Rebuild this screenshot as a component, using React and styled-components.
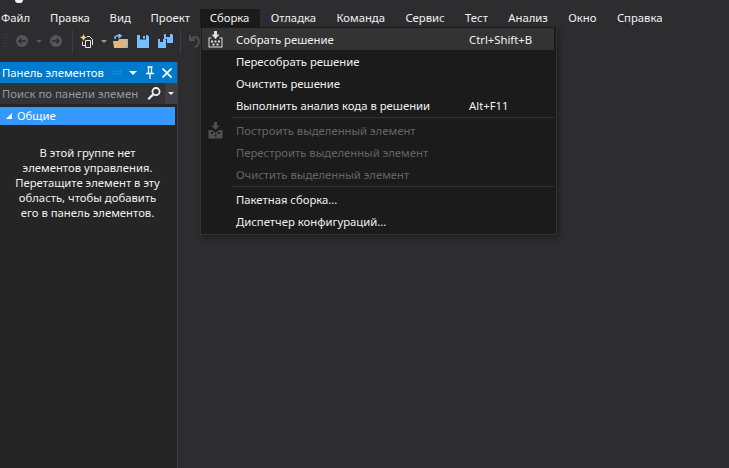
import React from 'react';
import styled, { createGlobalStyle } from 'styled-components';

const MENU = ['Файл', 'Правка', 'Вид', 'Проект', 'Сборка', 'Отладка', 'Команда', 'Сервис', 'Тест', 'Анализ', 'Окно', 'Справка'];

const GlobalStyle = createGlobalStyle`
  html, body { margin: 0; padding: 0; background: #2d2d30; }
  body { font-family: "Noto Sans", "Open Sans", sans-serif; font-size: 11.3px; overflow: hidden; }
  * { box-sizing: border-box; }
`;

const Page = styled.div`
  position: relative;
  width: 729px;
  height: 468px;
  display: flex;
  flex-direction: column;
  background: #2d2d30;
  color: #f1f1f1;
  overflow: hidden;
`;

const TitleStrip = styled.div`
  height: 9px;
  padding-left: 15px;
  flex: none;
`;

const LogoTip = styled.div`
  width: 8px;
  height: 3px;
  background: #f1f1f1;
  border-radius: 0 0 4px 4px;
`;

const MenuBar = styled.nav`
  display: flex;
  height: 18px;
  flex: none;
`;

const MenuItem = styled.div`
  height: 18px;
  line-height: 17px;
  padding: 0 10.2px;
  color: #f1f1f1;
  background: ${p => (p.$open ? '#1b1b1c' : 'transparent')};
  &:first-child { padding: 0 9px 0 1px; }
  &:nth-child(-n + 4) { padding-right: 9.6px; }
  ${p => p.$open && 'margin-right: 1px;'}
`;

const Toolbar = styled.div`
  display: flex;
  align-items: center;
  height: 35px;
  flex: none;
  padding: 0 0 7px 3px;
`;

const Grip = styled.div`
  width: 5px;
  height: 16px;
  margin-right: 8px;
  background-image: radial-gradient(#4a4a4e 0.7px, transparent 0.8px);
  background-size: 2.5px 3px;
`;

const ToolIcon = styled.svg`
  display: block;
  flex: none;
  margin-right: ${p => p.$gap || 0}px;
`;

const Caret = styled.div`
  flex: none;
  width: 0;
  height: 0;
  border-left: 3px solid transparent;
  border-right: 3px solid transparent;
  border-top: 3px solid ${p => p.$color};
  margin-right: ${p => p.$gap || 0}px;
`;

const ToolSep = styled.div`
  width: 1px;
  height: 23px;
  background: #3f3f42;
  flex: none;
  margin-right: ${p => p.$gap || 0}px;
`;

const Body = styled.div`
  flex: 1;
  display: flex;
  min-height: 0;
`;

const Panel = styled.aside`
  width: 178px;
  flex: none;
  display: flex;
  flex-direction: column;
  background: #252526;
  border-right: 1px solid #3f3f46;
`;

const PanelHeader = styled.header`
  height: 21px;
  flex: none;
  display: flex;
  align-items: center;
  padding-left: 2px;
  background: #007acc;
  color: #fff;
`;

const PanelTitle = styled.span`
  width: 110px;
  white-space: nowrap;
`;

const HeaderGrip = styled.div`
  width: 9px;
  height: 6px;
  margin-right: 8px;
  background-image: radial-gradient(#5fb2e6 0.6px, transparent 0.7px);
  background-size: 2.5px 2.5px;
`;

const HeaderCaret = styled(Caret)`
  border-left-width: 4px;
  border-right-width: 4px;
  border-top-width: 4px;
  margin-right: 9px;
`;

const SearchRow = styled.div`
  height: 21px;
  flex: none;
  display: flex;
  align-items: stretch;
  background: #333337;
`;

const SearchText = styled.div`
  width: 143px;
  padding-left: 2px;
  line-height: 21px;
  color: #999;
  white-space: nowrap;
  overflow: hidden;
`;

const SearchButton = styled.div`
  width: 22px;
  display: flex;
  align-items: center;
  justify-content: center;
`;

const SearchDrop = styled.div`
  width: 12px;
  display: flex;
  align-items: center;
  justify-content: center;
  background: #3f3f46;
`;

const GroupRow = styled.div`
  height: 18px;
  width: 175px;
  margin-top: 3px;
  flex: none;
  display: flex;
  align-items: center;
  gap: 5px;
  padding-left: 6px;
  line-height: 18px;
  background: #3399ff;
  color: #fff;
`;

const EmptyMessage = styled.p`
  margin: 20px 0 0;
  padding: 0 6px 0 4px;
  text-align: center;
  line-height: 15px;
  color: #f1f1f1;
  white-space: nowrap;
`;

const Dropdown = styled.div`
  position: absolute;
  left: 200px;
  top: 27px;
  width: 357px;
  height: 208px;
  padding: 1px 2px 1px 1px;
  background: #1b1b1c;
  border: 1px solid #333337;
  border-top: none;
  box-shadow: 2px 3px 5px rgba(0, 0, 0, 0.35);
`;

const Row = styled.div`
  display: flex;
  align-items: center;
  height: 22px;
  background: ${p => (p.$active ? '#333334' : 'transparent')};
  color: ${p => (p.$disabled ? '#656565' : '#f1f1f1')};
`;

const RowIcon = styled.div`
  width: 34px;
  flex: none;
  display: flex;
  justify-content: center;
  padding-right: 7px;
`;

const RowLabel = styled.span`
  width: 233px;
  flex: none;
  white-space: nowrap;
`;

const RowDivider = styled.div`
  height: 1px;
  margin: 1px 0 1px 30px;
  background: #333337;
`;

const NavIcon = ({ dir, gap }) => (
  <ToolIcon $gap={gap} width="12" height="12" viewBox="0 0 12 12">
    <circle cx="6" cy="6" r="6" fill="#555558" />
    <path d={dir === 'left' ? 'M10 6H3M5.5 3.5 3 6l2.5 2.5' : 'M2 6h7M6.5 3.5 9 6 6.5 8.5'} stroke="#2d2d30" strokeWidth="1.5" fill="none" />
  </ToolIcon>
);

const NewProjectIcon = ({ gap }) => (
  <ToolIcon $gap={gap} width="13" height="14" viewBox="0 0 13 14">
    <path d="M2.5 7.5V11.5H5M7 2.5H9.5L12.5 5.5V11" stroke="#e6e6e6" fill="none" />
    <path d="M5.5 6.5H10.5V13.5H5.5Z" stroke="#e6e6e6" fill="#2d2d30" />
    <path d="M3.5 0 4.6 2.4 7 3.5 4.6 4.6 3.5 7 2.4 4.6 0 3.5 2.4 2.4Z" fill="#f2cf7e" />
  </ToolIcon>
);

const OpenIcon = ({ gap }) => (
  <ToolIcon $gap={gap} width="15" height="14" viewBox="0 0 15 14">
    <path d="M0 7H5L6 5H14.5V14H1Z" fill="#dcb67a" />
    <path d="M14.5 5V13.5H12" stroke="#75beff" fill="none" />
    <path d="M2 5V3.5C2 2 4 1.5 7 1.5M5.5 0 8 1.8 5.5 4" stroke="#75beff" strokeWidth="1.6" fill="none" />
  </ToolIcon>
);

const SaveIcon = ({ gap }) => (
  <ToolIcon $gap={gap} width="12" height="13" viewBox="0 0 12 13">
    <path fillRule="evenodd" d="M0 0H10.5L12 1.5V13H0ZM3 0V4.5H9V0Z" fill="#75beff" />
    <rect x="6" y="1" width="2" height="2.5" fill="#75beff" />
  </ToolIcon>
);

const SaveAllIcon = ({ gap }) => (
  <ToolIcon $gap={gap} width="15" height="14" viewBox="0 0 15 14">
    <path fillRule="evenodd" d="M6 0H14L15 1V9H9V5H6ZM8 0V3H12V0Z" fill="#75beff" />
    <path fillRule="evenodd" d="M0 5H7L8 6V14H0ZM2 5V8H5V5Z" fill="#75beff" />
  </ToolIcon>
);

const UndoIcon = () => (
  <ToolIcon width="11" height="14" viewBox="0 0 11 14">
    <path d="M1 1V6H6M1.5 5.5 4 3.5C7.5 2 10 4 10 7.5 10 10 8.5 12 6 13" stroke="#505053" strokeWidth="2" fill="none" />
  </ToolIcon>
);

const BuildIcon = ({ color, solid }) => (
  <svg width="15" height="17" viewBox="0 0 15 17">
    <path d="M6 0H9V3.5H11.5L7.5 8 3.5 3.5H6Z" fill={color} />
    {solid ? (
      <path fillRule="evenodd" d="M0.5 8H4L7.5 11 11 8H14.5V16.5H0.5ZM3 10V12H5V10ZM10 10V12H12V10ZM6.5 12.5V14.5H8.5V12.5Z" fill={color} />
    ) : (
      <g fill={color}>
        <path d="M3.5 6.5H0.5V16.5H14.5V6.5H11.5V7.5H13.5V15.5H1.5V7.5H3.5Z" />
        <rect x="3" y="9.5" width="2" height="2" />
        <rect x="6.5" y="9.5" width="2" height="2" />
        <rect x="10" y="9.5" width="2" height="2" />
        <rect x="4.5" y="12.5" width="2" height="2" />
        <rect x="8.5" y="12.5" width="2" height="2" />
      </g>
    )}
  </svg>
);

const PinGlyph = styled.svg`
  margin-right: 8px;
`;

const PinIcon = () => (
  <PinGlyph width="8" height="13" viewBox="0 0 8 13">
    <path d="M1.5 1H6.5M2.5 1V7M5.5 1V7M0 7.5H8M4 8V13" stroke="#fff" strokeWidth="1.3" fill="none" />
  </PinGlyph>
);

const CloseIcon = () => (
  <svg width="10" height="10" viewBox="0 0 10 10">
    <path d="M0.5 0.5 9.5 9.5M9.5 0.5 0.5 9.5" stroke="#fff" strokeWidth="1.7" />
  </svg>
);

const SearchIcon = () => (
  <svg width="14" height="13" viewBox="0 0 14 13">
    <circle cx="9" cy="4.6" r="3.6" stroke="#f1f1f1" strokeWidth="1.8" fill="none" />
    <path d="M6 7.6 1.2 12.2" stroke="#f1f1f1" strokeWidth="2.2" />
  </svg>
);

const GroupArrow = () => (
  <svg width="6" height="6" viewBox="0 0 6 6">
    <path d="M6 0V6H0Z" fill="#fff" />
  </svg>
);

export default function App() {
  return (
    <Page>
      <GlobalStyle />
      <TitleStrip>
        <LogoTip />
      </TitleStrip>
      <MenuBar>
        {MENU.map(name => (
          <MenuItem key={name} $open={name === 'Сборка'}>{name}</MenuItem>
        ))}
      </MenuBar>
      <Toolbar>
        <Grip />
        <NavIcon dir="left" gap={8} />
        <Caret $color="#5a5a5d" $gap={8} />
        <NavIcon dir="right" gap={10} />
        <ToolSep $gap={7} />
        <NewProjectIcon gap={8} />
        <Caret $color="#9a9a9a" $gap={6} />
        <OpenIcon gap={9} />
        <SaveIcon gap={9} />
        <SaveAllIcon gap={7} />
        <ToolSep $gap={8} />
        <UndoIcon />
      </Toolbar>
      <Body>
        <Panel>
          <PanelHeader>
            <PanelTitle>Панель элементов</PanelTitle>
            <HeaderGrip />
            <HeaderCaret $color="#fff" />
            <PinIcon />
            <CloseIcon />
          </PanelHeader>
          <SearchRow>
            <SearchText>Поиск по панели элемен</SearchText>
            <SearchButton><SearchIcon /></SearchButton>
            <SearchDrop><Caret $color="#f1f1f1" /></SearchDrop>
          </SearchRow>
          <GroupRow>
            <GroupArrow />
            Общие
          </GroupRow>
          <EmptyMessage>
            В этой группе нет<br />
            элементов управления.<br />
            Перетащите элемент в эту<br />
            область, чтобы добавить<br />
            его в панель элементов.
          </EmptyMessage>
        </Panel>
      </Body>
      <Dropdown>
        <Row $active>
          <RowIcon><BuildIcon color="#e0e0e0" /></RowIcon>
          <RowLabel>Собрать решение</RowLabel>
          <span>Ctrl+Shift+B</span>
        </Row>
        <Row><RowIcon /><RowLabel>Пересобрать решение</RowLabel></Row>
        <Row><RowIcon /><RowLabel>Очистить решение</RowLabel></Row>
        <Row>
          <RowIcon />
          <RowLabel>Выполнить анализ кода в решении</RowLabel>
          <span>Alt+F11</span>
        </Row>
        <RowDivider />
        <Row $disabled>
          <RowIcon><BuildIcon color="#505052" solid /></RowIcon>
          <RowLabel>Построить выделенный элемент</RowLabel>
        </Row>
        <Row $disabled><RowIcon /><RowLabel>Перестроить выделенный элемент</RowLabel></Row>
        <Row $disabled><RowIcon /><RowLabel>Очистить выделенный элемент</RowLabel></Row>
        <RowDivider />
        <Row><RowIcon /><RowLabel>Пакетная сборка...</RowLabel></Row>
        <Row><RowIcon /><RowLabel>Диспетчер конфигураций...</RowLabel></Row>
      </Dropdown>
    </Page>
  );
}
